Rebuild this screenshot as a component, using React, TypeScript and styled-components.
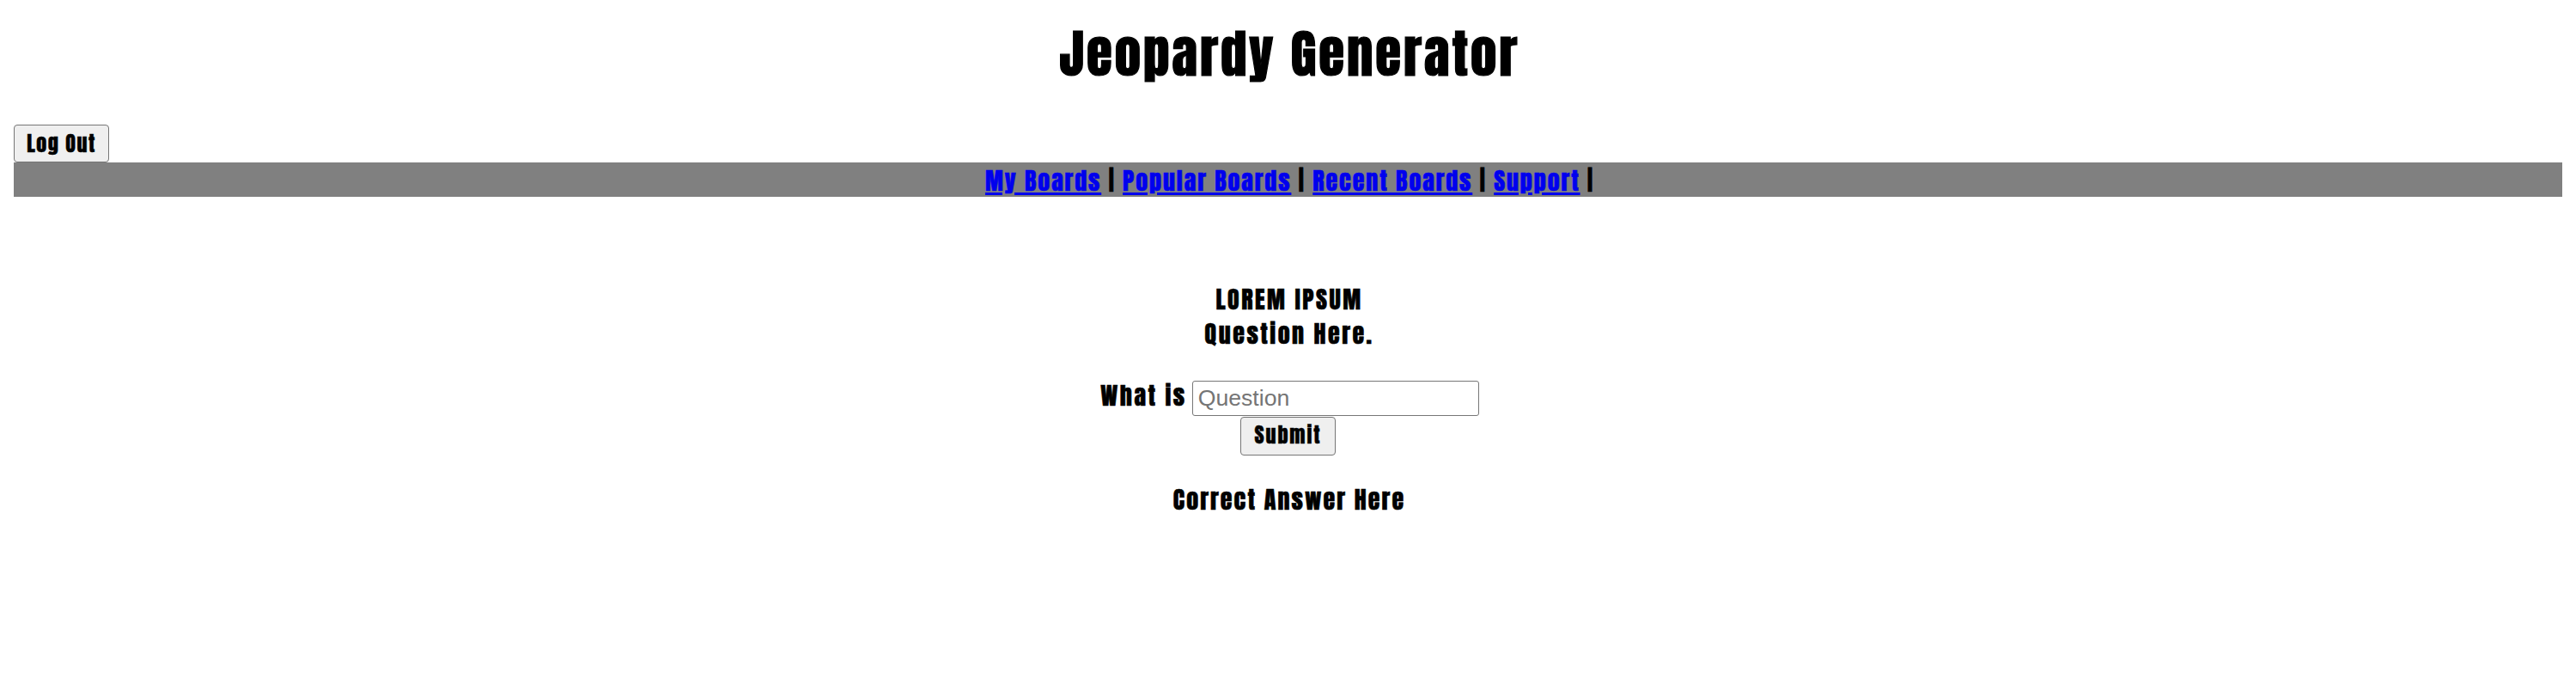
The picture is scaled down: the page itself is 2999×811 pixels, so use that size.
import React from "react";
import styled, { createGlobalStyle } from "styled-components";

const GlobalStyle = createGlobalStyle`
  html, body { background: #ffffff; }
  body {
    margin: 16px;
    font-family: Anton, Impact, "Liberation Sans Narrow", sans-serif;
    color: #000000;
    -webkit-text-stroke: 0.6px currentColor;
  }
`;

const Page = styled.div`
  display: flex;
  flex-direction: column;
`;

const Title = styled.h1`
  margin: 7px 0 44px;
  padding-left: 4px;
  font-size: 61px;
  line-height: 78px;
  font-weight: 400;
  letter-spacing: 2.95px;
  text-align: center;
  -webkit-text-stroke: 1.2px currentColor;
`;

const PlainButton = styled.button`
  box-sizing: border-box;
  height: 44px;
  padding: 0 16px;
  border: 1px solid #767676;
  border-radius: 4px;
  background: #efefef;
  color: #000000;
  font-family: Anton, Impact, sans-serif;
  font-size: 24px;
  line-height: 40px;
  letter-spacing: 1.5px;
  -webkit-text-stroke: 0.5px currentColor;
  cursor: pointer;
`;

const LogOutButton = styled(PlainButton)`
  align-self: flex-start;
  width: 111px;
  padding: 0;
`;

const NavBar = styled.nav`
  height: 40px;
  padding-left: 4px;
  background: #808080;
  text-align: center;
  font-size: 28px;
  line-height: 42px;
  letter-spacing: 1.9px;
`;

const NavLink = styled.a`
  color: #0000ee;
  text-decoration: underline;
  text-decoration-thickness: 3px;
  text-underline-offset: 2px;
`;

const Main = styled.main`
  display: flex;
  flex-direction: column;
  align-items: center;
  margin-top: 99px;
`;

const Prompt = styled.h3`
  margin: 0;
  padding-left: 3px;
  font-size: 28px;
  line-height: 40px;
  font-weight: 400;
  letter-spacing: 2.5px;
  text-align: center;
`;

const AnswerForm = styled.form`
  display: flex;
  flex-direction: column;
  align-items: center;
  margin-top: 32px;
`;

const AnswerRow = styled.div`
  display: flex;
  align-items: baseline;
  gap: 6px;
  padding-left: 4px;
`;

const Label = styled.label`
  font-size: 28px;
  line-height: 40px;
  letter-spacing: 2.5px;
`;

const AnswerInput = styled.input`
  box-sizing: border-box;
  width: 334px;
  height: 41px;
  padding: 0 6px;
  border: 1px solid #767676;
  border-radius: 3px;
  background: #ffffff;
  font-family: "Liberation Sans", Arial, sans-serif;
  font-size: 26.67px;
  color: #000000;
  -webkit-text-stroke: 0;
  &::placeholder { color: #757575; }
`;

const SubmitButton = styled(PlainButton)`
  width: 111px;
  height: 45px;
  margin-top: 1px;
  padding: 0 0 3px;
  letter-spacing: 1.9px;
`;

const Result = styled.h3`
  margin: 31px 0 0;
  padding-left: 3px;
  font-size: 28px;
  line-height: 40px;
  font-weight: 400;
  letter-spacing: 2.1px;
`;

const links = ["My Boards", "Popular Boards", "Recent Boards", "Support"];

export default function App() {
  return (
    <>
      <GlobalStyle />
      <Page>
        <Title>Jeopardy Generator</Title>
        <LogOutButton type="button">Log Out</LogOutButton>
        <NavBar>
          {links.map((l, i) => (
            <React.Fragment key={l}>
              <NavLink href="#">{l}</NavLink>
              {i < links.length - 1 ? " | " : " |"}
            </React.Fragment>
          ))}
        </NavBar>
        <Main>
          <Prompt>
            LOREM IPSUM
            <br />
            Question Here.
          </Prompt>
          <AnswerForm onSubmit={(e) => e.preventDefault()}>
            <AnswerRow>
              <Label htmlFor="answer">What is</Label>
              <AnswerInput id="answer" placeholder="Question" />
            </AnswerRow>
            <SubmitButton type="submit">Submit</SubmitButton>
          </AnswerForm>
          <Result>Correct Answer Here</Result>
        </Main>
      </Page>
    </>
  );
}
